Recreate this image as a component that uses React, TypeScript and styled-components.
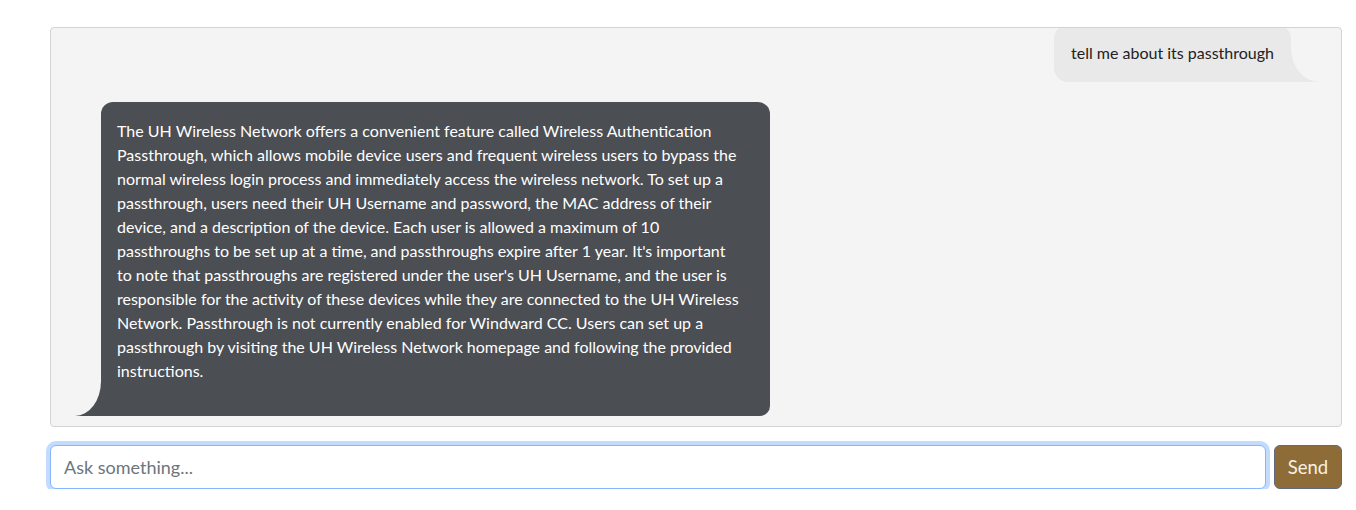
import React from "react";
import styled, { createGlobalStyle } from "styled-components";

const GlobalStyle = createGlobalStyle`
  html, body { margin: 0; padding: 0; background: #ffffff; }
  body { font-family: "Segoe UI", Lato, "Noto Sans", sans-serif; }
  * { box-sizing: border-box; }
`;

const Page = styled.div`
  padding: 27px 14px 0 50px;
  display: flex;
  flex-direction: column;
  gap: 18px;
`;

const ChatBox = styled.div`
  height: 400px;
  background: #f4f4f4;
  border: 1px solid #d3d3d3;
  border-radius: 4px;
  overflow: hidden;
  display: flex;
  flex-direction: column;
  justify-content: flex-end;
  gap: 20px;
  padding: 0 50px 10px 50px;
`;

const Bubble = styled.div<{ $me?: boolean }>`
  position: relative;
  align-self: ${(p) => (p.$me ? "flex-end" : "flex-start")};
  width: ${(p) => (p.$me ? "auto" : "669px")};
  padding: ${(p) => (p.$me ? "16px 17px 17px 17px" : "17px 28px 17px 16px")};
  background: ${(p) => (p.$me ? "#e9e9e9" : "#4b4e53")};
  color: ${(p) => (p.$me ? "#222222" : "#ffffff")};
  border-radius: ${(p) => (p.$me ? "14px 14px 0 14px" : "12px 12px 10px 0")};
  font-size: 16px;
  line-height: 24px;

  &::before {
    content: "";
    position: absolute;
    bottom: 0;
    ${(p) => (p.$me ? "right: -28px;" : "left: -26px;")}
    width: 30px;
    height: 36px;
    background: ${(p) => (p.$me ? "#e9e9e9" : "#4b4e53")};
    z-index: 0;
  }

  &::after {
    content: "";
    position: absolute;
    bottom: 0;
    ${(p) => (p.$me ? "right: -40px;" : "left: -40px;")}
    width: 40px;
    height: 36px;
    background: #f4f4f4;
    ${(p) =>
      p.$me
        ? "border-bottom-left-radius: 28px 35px;"
        : "border-bottom-right-radius: 26px 35px;"}
    z-index: 1;
  }
`;

const BubbleText = styled.p<{ $spaced?: boolean }>`
  position: relative;
  z-index: 2;
  margin: 0 0 ${(p) => (p.$spaced ? "16px" : "0")} 0;
`;

const InputRow = styled.form`
  display: flex;
  gap: 8px;
  align-items: stretch;
`;

const AskInput = styled.input`
  flex: 1;
  height: 44px;
  padding: 6px 13px;
  font-family: "Segoe UI", Lato, "Noto Sans", sans-serif;
  font-size: 18px;
  color: #212529;
  background: #ffffff;
  border: 1px solid #86b7fe;
  border-radius: 6px;
  outline: none;
  box-shadow: 0 0 0 4px rgba(13, 110, 253, 0.25);
  &::placeholder { color: #6c757d; }
`;

const SendButton = styled.button`
  width: 68px;
  height: 44px;
  background: #8d6c38;
  color: #f8f1e2;
  border: 1px solid #5e6b7e;
  border-radius: 6px;
  font-family: "Segoe UI", Lato, "Noto Sans", sans-serif;
  font-size: 18.5px;
  padding: 0;
  cursor: pointer;
`;

const answer =
  "The UH Wireless Network offers a convenient feature called Wireless Authentication Passthrough, which allows mobile device users and frequent wireless users to bypass the normal wireless login process and immediately access the wireless network. To set up a passthrough, users need their UH Username and password, the MAC address of their device, and a description of the device. Each user is allowed a maximum of 10 passthroughs to be set up at a time, and passthroughs expire after 1 year. It's important to note that passthroughs are registered under the user's UH Username, and the user is responsible for the activity of these devices while they are connected to the UH Wireless Network. Passthrough is not currently enabled for Windward CC. Users can set up a passthrough by visiting the UH Wireless Network homepage and following the provided instructions.";

export default function App() {
  return (
    <>
      <GlobalStyle />
      <Page>
        <ChatBox>
          <Bubble $me>
            <BubbleText>tell me about its passthrough</BubbleText>
          </Bubble>
          <Bubble>
            <BubbleText $spaced>{answer}</BubbleText>
          </Bubble>
        </ChatBox>
        <InputRow onSubmit={(e) => e.preventDefault()}>
          <AskInput placeholder="Ask something..." autoFocus />
          <SendButton type="submit">Send</SendButton>
        </InputRow>
      </Page>
    </>
  );
}
